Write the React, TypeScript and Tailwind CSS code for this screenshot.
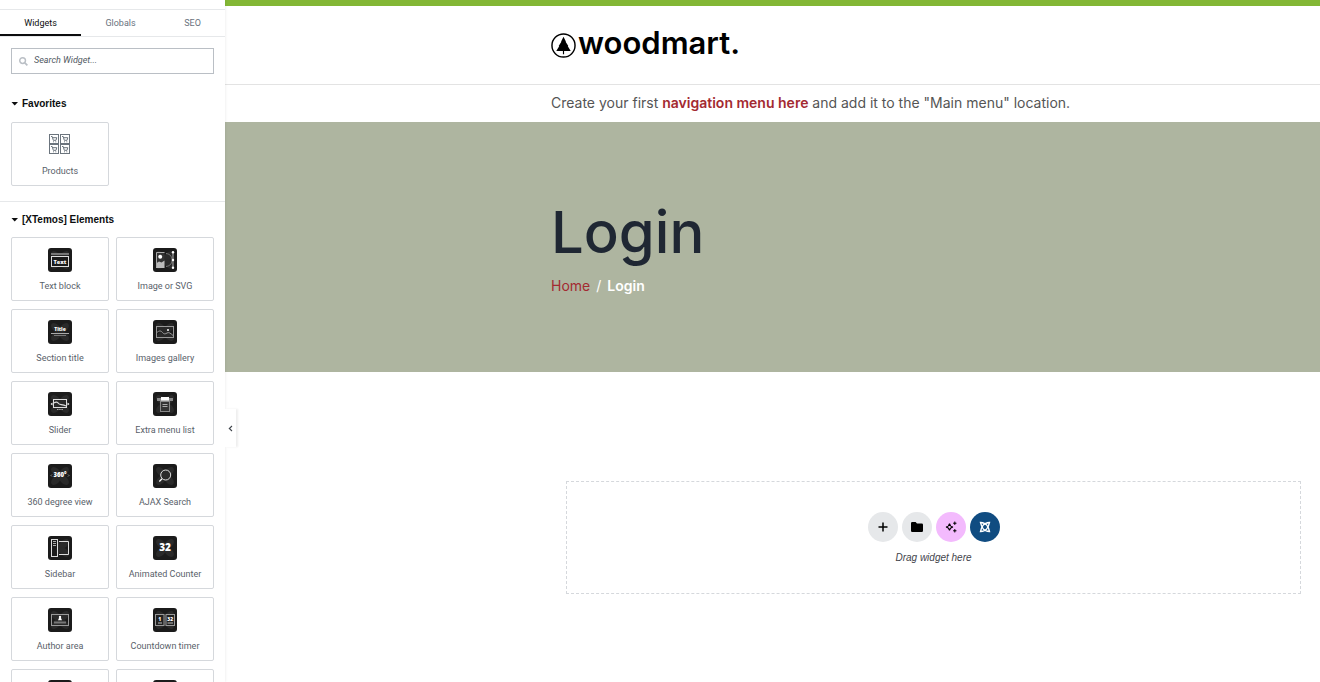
import type { ReactNode } from "react";
import { clsx } from "clsx";

type Widget = {
  label: string;
  icon: ReactNode;
};

/* Dark rounded tile with the faint petals behind every XTemos glyph */
function Tile({ children }: { children?: ReactNode }) {
  return (
    <svg viewBox="0 0 24 24" className="block size-6" aria-hidden="true">
      <rect width="24" height="24" rx="3" fill="#1b1b1b" />
      <g fill="#2a2a2a">
        <ellipse cx="8" cy="8" rx="6" ry="3.6" transform="rotate(45 8 8)" />
        <ellipse cx="16" cy="8" rx="6" ry="3.6" transform="rotate(-45 16 8)" />
        <ellipse cx="8" cy="16" rx="6" ry="3.6" transform="rotate(-45 8 16)" />
        <ellipse cx="16" cy="16" rx="6" ry="3.6" transform="rotate(45 16 16)" />
      </g>
      {children}
    </svg>
  );
}

function TileText(props: { x: number; y: number; size: number; children: string }) {
  return (
    <text
      x={props.x}
      y={props.y}
      fontSize={props.size}
      fontWeight="800"
      fontFamily="'Open Sans', sans-serif"
      textAnchor="middle"
      fill="#fff"
    >
      {props.children}
    </text>
  );
}

const elements: Widget[] = [
  {
    label: "Text block",
    icon: (
      <Tile>
        <path d="M3 6h18" stroke="#777" strokeWidth="2" />
        <rect x="3.5" y="8.5" width="17" height="10" fill="#1b1b1b" stroke="#ddd" />
        <TileText x={12} y={15.7} size={5.6}>Text</TileText>
      </Tile>
    ),
  },
  {
    label: "Image or SVG",
    icon: (
      <Tile>
        <rect x="3" y="4" width="8.5" height="16" fill="#333" />
        <path d="M3 20V15.5L6 13.5L8.5 14.5L11.5 12.5V20Z" fill="#bbb" />
        <path d="M11.5 4.5H3.5V19.5" fill="none" stroke="#aaa" />
        <circle cx="7.2" cy="8.8" r="2" fill="#fff" />
        <path d="M13 5.5C17.5 6 19 9 19 12S17.5 18 13 18.5" fill="none" stroke="#777" />
        <path d="M20 4V20" stroke="#ddd" strokeWidth="0.8" />
        <circle cx="20" cy="4.3" r="1.2" fill="#fff" />
        <circle cx="20" cy="12" r="1.2" fill="#fff" />
        <circle cx="20" cy="19.7" r="1.2" fill="#fff" />
      </Tile>
    ),
  },
  {
    label: "Section title",
    icon: (
      <Tile>
        <TileText x={12} y={11} size={5}>Title</TileText>
        <path d="M3 13.500H21" stroke="#aaa" />
        <path d="M6 15.500H18" stroke="#777" />
      </Tile>
    ),
  },
  {
    label: "Images gallery",
    icon: (
      <Tile>
        <rect x="3.5" y="6.5" width="17" height="11" fill="none" stroke="#999" />
        <path d="M4 12.5C6 10.5 8 10.5 9.5 12.5S12.5 14 14 13S17.500 13 20 15.5" fill="none" stroke="#999" />
        <circle cx="15" cy="10" r="1" fill="#fff" />
      </Tile>
    ),
  },
  {
    label: "Slider",
    icon: (
      <Tile>
        <rect x="5.5" y="7.5" width="13" height="8" fill="none" stroke="#ddd" />
        <path d="M6 11C8 9.5 9.5 10 10.5 11.500S14.5 12 18 14" fill="none" stroke="#ddd" strokeWidth="1.2" />
        <path d="M4.500 10.500L2.500 12L4.500 13.500ZM19.500 10.500L21.500 12L19.500 13.500Z" fill="#fff" />
        <path d="M9 17.500H15" stroke="#aaa" strokeDasharray="1.5 0.7" />
      </Tile>
    ),
  },
  {
    label: "Extra menu list",
    icon: (
      <Tile>
        <path d="M4 7.500H20" stroke="#888" strokeWidth="3" />
        <rect x="8" y="5" width="8" height="3.500" fill="#fff" />
        <rect x="7.5" y="9.5" width="9" height="10" fill="#333" stroke="#888" />
        <path d="M9.5 12.5H14.5M9.5 14.5H14.5" stroke="#aaa" />
      </Tile>
    ),
  },
  {
    label: "360 degree view",
    icon: (
      <Tile>
        <TileText x={12} y={13} size={6}>360°</TileText>
        <path d="M4 10.5L3 11.5L4 12.5M20 10.5L21 11.5L20 12.5" fill="none" stroke="#aaa" strokeWidth="0.8" />
      </Tile>
    ),
  },
  {
    label: "AJAX Search",
    icon: (
      <Tile>
        <circle cx="12.7" cy="11" r="5" fill="#2a2a2a" stroke="#ddd" />
        <path d="M9 14.7L6.3 17.5" stroke="#fff" strokeWidth="1.3" />
      </Tile>
    ),
  },
  {
    label: "Sidebar",
    icon: (
      <Tile>
        <rect x="3.5" y="3.5" width="6" height="17" fill="#1b1b1b" stroke="#ddd" />
        <path d="M5 5.500H8M5 7.500H8M5 9.500H8" stroke="#aaa" />
        <path d="M11 5.5H20.5V18.5H11" fill="none" stroke="#ddd" />
      </Tile>
    ),
  },
  {
    label: "Animated Counter",
    icon: (
      <Tile>
        <TileText x={12} y={15} size={10}>32</TileText>
      </Tile>
    ),
  },
  {
    label: "Author area",
    icon: (
      <Tile>
        <rect x="3.5" y="6.5" width="17" height="11" fill="none" stroke="#999" />
        <circle cx="12" cy="9" r="1.2" fill="#fff" />
        <path d="M10 12.2L11 10H13L14 12.200Z" fill="#fff" />
        <path d="M6 14.5H18" stroke="#777" strokeWidth="2" />
      </Tile>
    ),
  },
  {
    label: "Countdown timer",
    icon: (
      <Tile>
        <rect x="2.5" y="6.5" width="8.5" height="11" fill="#222" stroke="#999" />
        <rect x="13" y="6.5" width="8.5" height="11" fill="#222" stroke="#999" />
        <path d="M12 7V17" stroke="#666" />
        <TileText x={6.8} y={12.5} size={5}>1</TileText>
        <TileText x={17.2} y={12.5} size={5}>32</TileText>
        <path d="M5 15H9M14.5 15H20" stroke="#bbb" />
      </Tile>
    ),
  },
  { label: "", icon: <Tile /> },
  { label: "", icon: <Tile /> },
];

function CartCell({ x, y }: { x: number; y: number }) {
  return (
    <g transform={`translate(${x} ${y})`} fill="none" stroke="#6b747d">
      <rect x="0.5" y="0.5" width="9" height="9" />
      <path d="M2 2.5H3.2L4.3 6.3H7L7.8 3.7H3.7" />
      <path d="M4 7.8H5M6.3 7.8H7.3" strokeWidth="0.9" />
    </g>
  );
}

function ProductsIcon() {
  return (
    <svg viewBox="0 0 24 24" className="block size-6" aria-hidden="true">
      <CartCell x={1} y={1} />
      <CartCell x={12} y={1} />
      <CartCell x={1} y={11} />
      <CartCell x={12} y={11} />
    </svg>
  );
}

function WidgetCard({ label, icon }: Widget) {
  return (
    <button
      type="button"
      className="flex h-16 flex-col items-center gap-[7px] rounded-xs border border-[#d5d8dc] bg-white pt-[10px] text-[9px] leading-[14px] text-[#59616a]"
    >
      {icon}
      {label && <span>{label}</span>}
    </button>
  );
}

function CategoryTitle({ children }: { children: string }) {
  return (
    <button
      type="button"
      className="flex items-center gap-1 px-[11px] font-['Liberation_Sans',sans-serif] text-[10px] leading-4 font-bold text-[#0c0d0e]"
    >
      <svg viewBox="0 0 7 4" className="h-1 w-[7px]" aria-hidden="true">
        <path d="M0.500 0H7L3.700 3.500Z" fill="#0c0d0e" />
      </svg>
      {children}
    </button>
  );
}

const tabs = [
  { label: "Widgets", width: "w-[81px]" },
  { label: "Globals", width: "w-[79px]" },
  { label: "SEO", width: "flex-1" },
];

function Panel() {
  return (
    <aside className="relative z-10 flex w-[225px] shrink-0 flex-col bg-white font-[Roboto,sans-serif] shadow-[0_0_3px_rgba(0,0,0,0.1)]">
      <div className="flex min-h-0 flex-1 flex-col overflow-hidden">
        <nav className="mt-[9px] flex h-7 shrink-0 border-y border-[#e6e8ea]">
          {tabs.map((tab, i) => (
            <button
              key={tab.label}
              type="button"
              className={clsx(
                "border-b-2 pt-px text-[9px] leading-6",
                tab.width,
                i === 0
                  ? "border-[#0c0d0e] text-[#0c0d0e]"
                  : "border-transparent text-[#69727d]",
              )}
            >
              {tab.label}
            </button>
          ))}
        </nav>

        <label className="mx-[11px] mt-[11px] flex h-[26px] shrink-0 items-center gap-[6px] border border-[#babfc5] px-[7px]">
          <svg viewBox="0 0 10 10" className="size-[9px] shrink-0" aria-hidden="true">
            <circle cx="4" cy="4" r="3.2" fill="none" stroke="#babfc5" strokeWidth="1.6" />
            <path d="M6.5 6.5L9.3 9.3" stroke="#babfc5" strokeWidth="1.9" />
          </svg>
          <input
            type="search"
            aria-label="Search Widget"
            placeholder="Search Widget..."
            className="min-w-0 flex-1 text-[9px] italic outline-none placeholder:text-[#515962]"
          />
        </label>

        <section className="mt-[22px] shrink-0 border-b border-[#e6e8ea] pb-[15px]">
          <CategoryTitle>Favorites</CategoryTitle>
          <div className="mt-[10px] grid grid-cols-2 gap-x-[7px] px-[11px]">
            <WidgetCard label="Products" icon={<ProductsIcon />} />
          </div>
        </section>

        <section className="mt-[10px] shrink-0">
          <CategoryTitle>[XTemos] Elements</CategoryTitle>
          <div className="mt-[9px] grid grid-cols-2 gap-x-[7px] gap-y-2 px-[11px]">
            {elements.map((el, i) => (
              <WidgetCard key={i} {...el} />
            ))}
          </div>
        </section>
      </div>

      {/* collapse handle */}
      <button
        type="button"
        aria-label="Hide panel"
        className="absolute top-[60%] left-full flex h-[38px] w-[11px] items-center justify-center bg-white shadow-[2px_0_2px_rgba(0,0,0,0.07)]"
      >
        <svg viewBox="0 0 5 7" className="h-[7px] w-[5px]" aria-hidden="true">
          <path d="M4 1L1.3 3.5L4 6" fill="none" stroke="#3f444b" strokeWidth="1.1" />
        </svg>
      </button>
    </aside>
  );
}

function Logo() {
  return (
    <a href="#" className="flex items-center gap-[2px] text-black">
      <svg viewBox="0 0 26 26" className="mt-1 size-[25px]" aria-hidden="true">
        <circle cx="13" cy="13" r="12" fill="none" stroke="#000" strokeWidth="1.5" />
        <path d="M13 4L15.6 9L15.2 9.2L18 13.5L17.5 13.8L20.5 18.8H13.6V22H12.4V18.8H5.5L8.5 13.8L8 13.5L10.8 9.2L10.4 9Z" fill="#000" />
      </svg>
      <span className="text-[31px] leading-9 font-semibold">woodmart.</span>
    </a>
  );
}

function DropZone() {
  const round = "flex size-[30px] items-center justify-center rounded-full";
  return (
    <section className="mt-[109px] mr-[19px] ml-[341px] flex flex-col items-center border border-dashed border-[#d5d8dc] pt-[30px] pb-[27px]">
      <div className="flex gap-1">
        <button type="button" aria-label="Add container" className={clsx(round, "bg-[#e6e8ea]")}>
          <svg viewBox="0 0 10 10" className="size-[10px]" aria-hidden="true">
            <path d="M5 0.5V9.5M0.5 5H9.5" stroke="#000" strokeWidth="1.5" />
          </svg>
        </button>
        <button type="button" aria-label="Add template" className={clsx(round, "bg-[#e6e8ea]")}>
          <svg viewBox="0 0 12 10" className="h-[10px] w-3" aria-hidden="true">
            <path d="M1.2 0H4.6L6 1.5H10.8Q12 1.5 12 2.7V8.8Q12 10 10.8 10H1.2Q0 10 0 8.8V1.2Q0 0 1.2 0Z" fill="#000" />
          </svg>
        </button>
        <button type="button" aria-label="Build with AI" className={clsx(round, "bg-[#f3bafd]")}>
          <svg viewBox="0 0 12 12" className="size-3" fill="none" aria-hidden="true">
            <path d="M4.5 2.5Q5 5.5 8 6Q5 6.5 4.5 9.5Q4 6.5 1 6Q4 5.5 4.5 2.5Z" stroke="#000" strokeWidth="1.1" />
            <path d="M9.8 0.5L10.3 1.7L11.5 2.2L10.3 2.7L9.8 3.9L9.3 2.7L8.1 2.2L9.3 1.7ZM9.8 8.1L10.3 9.3L11.5 9.8L10.3 10.3L9.8 11.5L9.3 10.3L8.1 9.8L9.3 9.3Z" fill="#000" stroke="#000" strokeWidth="0.4" />
          </svg>
        </button>
        <button type="button" aria-label="XTemos templates" className={clsx(round, "bg-[#104c81]")}>
          <svg viewBox="0 0 12 12" className="size-3" fill="none" stroke="#fff" strokeWidth="1.3" aria-hidden="true">
            <path d="M1.500 1.500Q6 1.800 7.800 4.200T10.500 10.500Q6 10.200 4.200 7.800T1.500 1.500Z" />
            <path d="M10.500 1.500Q6 1.800 4.200 4.200T1.500 10.500Q6 10.200 7.800 7.800T10.500 1.500Z" />
          </svg>
        </button>
      </div>
      <p className="mt-2 font-['Liberation_Sans',sans-serif] text-[10px] leading-4 text-[#3f444b] italic">
        Drag widget here
      </p>
    </section>
  );
}

function Preview() {
  return (
    <div className="min-w-0 flex-1 overflow-hidden bg-white font-[Inter,sans-serif] text-sm text-[#555]">
      <header>
        <div className="h-[6px] bg-[#83b735]" />
        <div className="flex h-[79px] items-center border-b border-[#e3e3e3] pb-1 pl-[326px]">
          <Logo />
        </div>
        <p className="pt-[7px] pb-[9px] pl-[326px] leading-[21px]">
          Create your first{" "}
          <a href="#" className="font-semibold text-[#a32a31]">
            navigation menu here
          </a>{" "}
          and add it to the "Main menu" location.
        </p>
      </header>

      <div className="flex h-[250px] flex-col justify-center bg-[#aeb5a0] pb-[2px] pl-[326px]">
        <h1 className="text-[58px] leading-[72px] font-medium text-[#1f2733]">Login</h1>
        <nav className="mt-2 flex gap-[6px] leading-5 text-white" aria-label="Breadcrumb">
          <a href="#" className="text-[#a32a31]">
            Home
          </a>
          <span>/</span>
          <span className="font-semibold">Login</span>
        </nav>
      </div>

      <DropZone />
    </div>
  );
}

export default function App() {
  return (
    <div className="flex h-screen overflow-hidden">
      <Panel />
      <Preview />
    </div>
  );
}
